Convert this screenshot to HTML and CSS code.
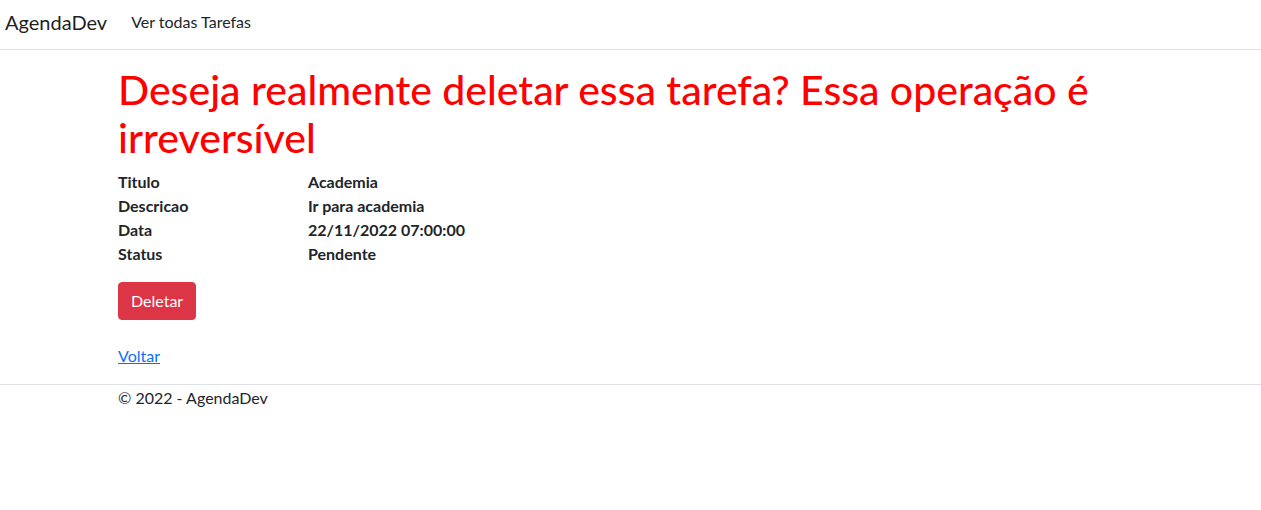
FILE: index.html
```html
<!DOCTYPE html>
<html lang="pt-br">
<head>
<meta charset="utf-8">
<title>AgendaDev</title>
<link rel="stylesheet" href="styles.css">
</head>
<body>
<header class="navbar">
  <a class="brand" href="#">AgendaDev</a>
  <a class="nav-link" href="#">Ver todas Tarefas</a>
</header>
<main class="container">
  <h1 class="title">Deseja realmente deletar essa tarefa? Essa operação é irreversível</h1>
  <dl class="details">
    <dt>Titulo</dt><dd>Academia</dd>
    <dt>Descricao</dt><dd>Ir para academia</dd>
    <dt>Data</dt><dd>22/11/2022 07:00:00</dd>
    <dt>Status</dt><dd>Pendente</dd>
  </dl>
  <form class="form">
    <button type="button" class="btn-danger">Deletar</button>
  </form>
  <a class="back" href="#">Voltar</a>
</main>
<footer class="footer">
  <div class="container">© 2022 - AgendaDev</div>
</footer>
</body>
</html>
```
FILE: styles.css
```css
* { box-sizing: border-box; }
html, body { margin: 0; padding: 0; }
body {
  font-family: "Segoe UI", Lato, "Noto Sans", sans-serif;
  font-size: 16px;
  line-height: 1.5;
  color: #212529;
  background: #fff;
}
.navbar {
  display: flex;
  align-items: center;
  height: 50px;
  padding: 0 5px;
  border-bottom: 1px solid #dee2e6;
}
.brand {
  font-size: 20px;
  color: rgba(0,0,0,.9);
  text-decoration: none;
  margin-right: 24px;
  line-height: 30px;
  margin-top: -6px;
}
.nav-link {
  font-size: 16px;
  color: #212529;
  text-decoration: none;
  margin-top: -6px;
}
.container {
  width: 1025px;
  margin: 0 auto;
}
main.container { padding-top: 16px; }
.title {
  margin: 0 0 8px;
  font-size: 41px;
  line-height: 48px;
  font-weight: 500;
  color: #ff0000;
}
.details {
  display: grid;
  grid-template-columns: 190px 1fr;
  margin: 0 0 16px;
  font-weight: 700;
  font-size: 16px;
  line-height: 24px;
}
.details dt, .details dd { margin: 0; }
.form { margin: 0 0 24px; }
.btn-danger {
  font-family: inherit;
  font-size: 16px;
  line-height: 24px;
  padding: 6px 12px;
  color: #fff;
  background: #dc3545;
  border: 1px solid #dc3545;
  border-radius: 4px;
}
.back {
  display: block;
  width: max-content;
  color: #0d6efd;
  text-decoration: underline;
  font-size: 16px;
  margin-bottom: 16px;
}
.footer {
  border-top: 1px solid #dee2e6;
  font-size: 16px;
  line-height: 26px;
  color: #212529;
}
```
